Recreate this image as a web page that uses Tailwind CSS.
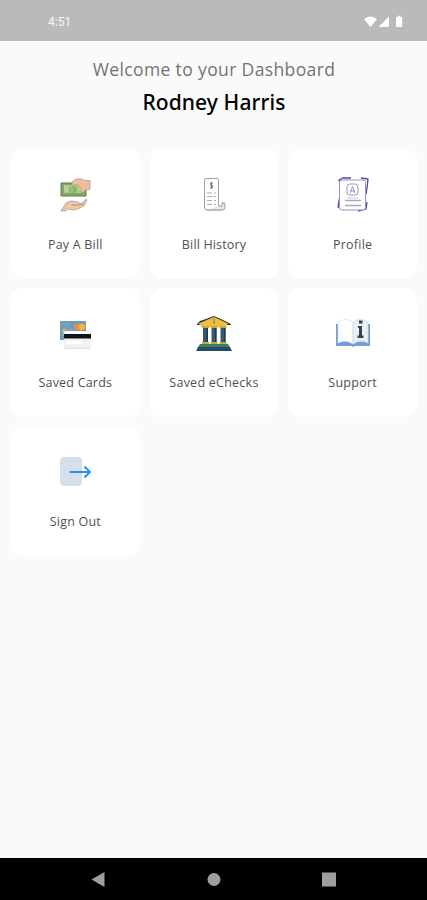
<!DOCTYPE html>
<html lang="en">
<head>
<meta charset="utf-8">
<title>Dashboard</title>
<script src="https://cdn.jsdelivr.net/npm/@tailwindcss/browser@4"></script>
</head>
<body class="bg-[#fafafa]">
<div class="flex h-[900px] w-[427px] flex-col overflow-hidden bg-[#fafafa] font-['Open_Sans','Noto_Sans',sans-serif]">
  <header class="flex h-[41px] shrink-0 items-center justify-between bg-[#bababa] pt-[2px] pr-[23px] pl-12 text-white">
    <span class="font-[Roboto,sans-serif] text-[12px] leading-4 text-white/90">4:51</span>
    <svg class="h-[14px] w-[41px]" viewBox="0 0 41 14" fill="currentColor"><path d="M1 4Q7.500-1 14 4L7.500 12ZM26 1.500V12H15.500ZM33.500 2h1.300V.8h2.600V2h1.300q.5 0 .5.500v9q0 .6-.6.6h-5q-.6 0-.6-.6v-9q0-.5.5-.5Z"/></svg>
  </header>
  <main class="flex-1">
    <div class="flex flex-col items-center pt-4 text-center whitespace-nowrap">
      <p class="pl-px text-[17.500px] leading-6 tracking-[0.37px] text-[#707479]">Welcome to your Dashboard</p>
      <h1 class="mt-[7px] pl-px font-['Noto_Sans',sans-serif] text-[21px] leading-7 font-medium tracking-[0.1px] text-black">Rodney Harris</h1>
    </div>
    <div class="mt-[33px] grid grid-cols-3 gap-[10px] pr-[10px] pl-[11px] text-[12.500px] leading-4 text-[#505050]">
      <div class="flex h-[129px] flex-col items-center rounded-xl bg-white pt-[21px]">
        <svg class="size-[50px]" viewBox="0 0 50 50" stroke-linejoin="round">
          <path d="M11 13h25v13H11Z" fill="#82a868" stroke="#607b50"/>
          <path d="M14 15h17v8H14Z" fill="#afcb91"/><ellipse cx="23" cy="19.500" rx="4" ry="3.500" fill="#86b568"/>
          <path d="M22 17v5M15 16l2 6M30 16v6" stroke="#c9dcae" stroke-width=".8" fill="none"/>
          <path d="M22 12l4-3h6l3 1.500h5v9h-4l-3 3-3-1 1-3-4-4-5 1Z" fill="#edbea2" stroke="#b69a8d" stroke-width=".8"/>
          <path d="M11 41l5-8 5-2 7 1 3 2 5-5 1 1-3 6-9 4-7-1-3 2Z" fill="#f0c5aa" stroke="#a99890" stroke-width=".8"/>
          <path d="M22 35h7l4-1" fill="none" stroke="#bd8768"/>
        </svg>
        <span class="mt-[17px] tracking-[0.2px]">Pay A Bill</span>
      </div>
      <div class="flex h-[129px] flex-col items-center rounded-xl bg-white pt-[21px]">
        <svg class="size-[50px]" viewBox="-1 0 50 50" fill="none" stroke="#a1a1a1">
          <path d="M16 8.500h11.500q1 0 1 1V37q0 3 2.500 3H17q-2.500 0-2.500-2V10q0-1.500 1.500-1.500Z" fill="#fff"/>
          <path d="M29 36h3v-3q3-1.500 3 1v4q0 2-3 2H17" fill="#e4e4e4"/>
          <path d="M23 13h-2.500v2.500h2V18H20M21.500 12v7" stroke="#777" stroke-width=".9"/>
          <path d="M17 23h5m2 0h2M17 26.500h5m2 0h2M17 30.500h5m2 0h2M17 34.500h5m2 0h2" stroke="#aaa"/>
        </svg>
        <span class="mt-[17px] tracking-[0.15px]">Bill History</span>
      </div>
      <div class="flex h-[129px] flex-col items-center rounded-xl bg-white pt-[21px]">
        <svg class="size-[50px]" viewBox="0 0 50 50" fill="none">
          <path d="M12 13l-1-3 4-2h8M33 8l7 1-1 9-1 6M12 25l-2 12 6 3" stroke="#5542a0" stroke-width="1.300"/>
          <path d="M30 41l8-2 1-7" stroke="#5542a0" stroke-width="1.300"/>
          <rect x="11.500" y="10" width="26" height="30" rx="2.500" fill="#fff" stroke="#9c94c2"/>
          <rect x="19" y="14" width="11" height="11" rx="3" fill="#fff" stroke="#9a94b8"/>
          <path d="M22 23l2.500-6.500L27 23M22.500 21h4" stroke="#9a94b8"/>
          <path d="M17 30.500h16M17 35.500h16" stroke="#aaa6c3" stroke-width="1.700"/><path d="M20 28h10M24 40h5" stroke="#c8c5d8"/>
        </svg>
        <span class="mt-[17px] tracking-[0.25px]">Profile</span>
      </div>
      <div class="flex h-[129px] flex-col items-center rounded-xl bg-white pt-[21px]">
        <svg class="size-[50px]" viewBox="0 -1 50 50">
          <rect x="10" y="11" width="26" height="19" rx="1" fill="#6f9db8"/><path d="M11 14h8l-5 6h14" fill="none" stroke="#83aac0"/>
          <path d="M12 19h4v7h-3Z" fill="#c5b08b"/>
          <circle cx="27" cy="17" r="3.300" fill="#ed8b39"/><circle cx="32" cy="17" r="3.300" fill="#f0b644"/>
          <rect x="14" y="21" width="27" height="18" rx="1.500" fill="#f0f0f1"/><path d="M15 21.500h25v2H15Z" fill="#fff"/>
          <path d="M14 24h27v4.500H14Z" fill="#101419"/><path d="M16 31h16v3H16Z" fill="#fff"/><path d="M15 38.500h25" stroke="#ddd"/>
        </svg>
        <span class="mt-[16px] tracking-[0.2px]">Saved Cards</span>
      </div>
      <div class="flex h-[129px] flex-col items-center rounded-xl bg-white pt-[21px]">
        <svg class="size-[50px]" viewBox="-1 -1 50 50">
          <path d="M7 14l3-3 6-2 8-3 9 4 8 4v1H7Z" fill="#34342f"/>
          <path d="M8.500 13.500L24 7l14 6.500L35 17H12Z" fill="#edbd45"/><path d="M24 9v5" stroke="#8c702d"/>
          <g fill="#345a72"><path d="M13 18h5v15h-5ZM21.500 18h5v15h-5ZM30.500 18h5v15h-5Z"/></g>
          <g fill="#21394a"><path d="M16.500 18H18v15h-1.500ZM25 18h1.500v15H25ZM34 18h1.500v15H34Z"/></g>
          <g fill="#cba93f"><path d="M12 16h7v2h-7ZM20.500 16h7v2h-7ZM29.500 16h7v2h-7ZM12 32h7v2.500h-7ZM20.500 32h7v2.500h-7ZM29.500 32h7v2.500h-7Z"/></g>
          <path d="M10 34h28l2 3H8Z" fill="#3b8069"/><path d="M8 37h32l2 4H6Z" fill="#214d65"/>
        </svg>
        <span class="mt-[16px] tracking-[0.25px]">Saved eChecks</span>
      </div>
      <div class="flex h-[129px] flex-col items-center rounded-xl bg-white pt-[21px]">
        <svg class="size-[50px]" viewBox="0 -1 50 50">
          <path d="M8 14h34v22H27l-2 1-2-1H8Z" fill="#6f9fd4"/>
          <path d="M10 12q8-5 15 0v22q-7-5-15-1Z" fill="#fff" stroke="#d5dfe9" stroke-width=".7"/>
          <path d="M25 12q7-5 15 0v21q-8-4-15 1Z" fill="#e9eff4" stroke="#c9d8e4" stroke-width=".7"/>
          <path d="M31 10.500h3.500v3H31ZM30 16h4v9.500h1.500V28H29.500v-2.500H31V18h-1Z" fill="#37434c"/>
        </svg>
        <span class="mt-[16px] tracking-[0.25px]">Support</span>
      </div>
      <div class="flex h-[129px] flex-col items-center rounded-xl bg-white pt-[21px]">
        <svg class="size-[50px]" viewBox="0 1 50 50" fill="none">
          <rect x="10" y="10" width="22" height="29" rx="4" fill="#d6dfed"/>
          <path d="M20.500 25h19M35 20l5 5-5 5" stroke="#2b91f0" stroke-width="1.900" stroke-linecap="round" stroke-linejoin="round"/>
        </svg>
        <span class="mt-[16px] tracking-[0.2px]">Sign Out</span>
      </div>
    </div>
  </main>
  <footer class="flex h-[42px] shrink-0 items-center bg-black text-[#9e9e9e]">
    <svg class="h-[42px] w-full" viewBox="0 0 427 42" fill="currentColor"><path d="M104.500 14v15L91.500 21.500Z"/><circle cx="214" cy="21.500" r="6.500"/><path d="M322 14.500h14v14h-14Z"/></svg>
  </footer>
</div>
</body>
</html>
